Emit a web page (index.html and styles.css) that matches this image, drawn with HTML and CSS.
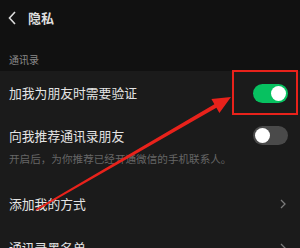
FILE: index.html
```html
<!DOCTYPE html>
<html lang="zh">
<head>
<meta charset="utf-8">
<link rel="stylesheet" href="styles.css">
</head>
<body>
<div class="page">
  <header class="top">
    <svg class="back" width="8" height="14" viewBox="0 0 8 14"><polyline points="7,1 1.5,7 7,13" fill="none" stroke="#dcdcdc" stroke-width="1.6"/></svg>
    <span class="title">隐私</span>
  </header>
  <div class="section">通讯录</div>
  <div class="list">
    <div class="row r1">
      <span class="label">加我为朋友时需要验证</span>
      <span class="toggle on"><span class="knob"></span></span>
    </div>
    <div class="row r2">
      <div class="main">
        <span class="label">向我推荐通讯录朋友</span>
        <span class="toggle off"><span class="knob"></span></span>
      </div>
      <div class="sub">开启后，为你推荐已经开通微信的手机联系人。</div>
    </div>
    <div class="row r3">
      <span class="label">添加我的方式</span>
      <svg class="chev" width="6" height="10" viewBox="0 0 6 10"><polyline points="1,1 5,5 1,9" fill="none" stroke="#7a7a7a" stroke-width="1.3"/></svg>
    </div>
    <div class="row r4">
      <span class="label">通讯录黑名单</span>
      <svg class="chev" width="6" height="10" viewBox="0 0 6 10"><polyline points="1,1 5,5 1,9" fill="none" stroke="#7a7a7a" stroke-width="1.3"/></svg>
    </div>
  </div>
  <div class="mark-box"></div>
  <svg class="mark-arrow" width="300" height="248" viewBox="0 0 300 248">
    <polygon fill="#e8221b" points="35.6,209.3 214.4,104.3 211.4,99.1 231,97 219.4,112.9 216.4,107.7 36.4,210.7"/>
  </svg>
</div>
</body>
</html>
```

FILE: styles.css
```css
* { box-sizing: border-box; }
html, body { margin: 0; padding: 0; }
body {
  background: #1a1a1a;
  font-family: "Noto Sans CJK SC", "Noto Sans", sans-serif;
  width: 300px;
  height: 248px;
  overflow: hidden;
}
.page { position: relative; width: 300px; height: 248px; overflow: hidden; }
.top {
  height: 36px;
  background: #111111;
  display: flex;
  align-items: center;
  padding-left: 8px;
  gap: 12px;
}
.back { display: block; }
.title {
  color: #dedede;
  font-size: 13px;
  font-weight: 700;
  line-height: 14px;
}
.section {
  background: #111111;
  height: 35px;
  padding: 17px 0 0 9px;
  color: #8a8a8a;
  font-size: 10px;
  line-height: 14px;
}
.list { background: #1b1b1b; }
.row {
  display: flex;
  align-items: center;
  justify-content: space-between;
  padding: 0 12px 0 9px;
}
.label { color: #e4e4e4; font-size: 12.8px; line-height: 16px; }
.r1 { height: 44px; }
.r2 {
  height: 67px;
  flex-direction: column;
  align-items: stretch;
  justify-content: flex-start;
  padding-top: 11px;
}
.r2 .main { display: flex; align-items: center; justify-content: space-between; }
.sub {
  color: #666666;
  font-size: 10.6px;
  line-height: 14px;
  margin-top: 7px;
  white-space: nowrap;
}
.r3 { height: 44px; padding-right: 14px; }
.r4 { height: 44px; padding-right: 14px; }
.toggle {
  width: 35px;
  height: 19px;
  border-radius: 10px;
  display: flex;
  align-items: center;
  padding: 0 2px;
}
.toggle.on { background: #07c160; justify-content: flex-end; }
.toggle.off { background: #4a4a4a; justify-content: flex-start; }
.knob { width: 15px; height: 15px; border-radius: 50%; background: #ffffff; }
.chev { display: block; }
.mark-box {
  position: absolute;
  left: 232px;
  top: 70px;
  width: 66px;
  height: 45px;
  border: 2px solid #e8221b;
}
.mark-arrow { position: absolute; left: 0; top: 0; }
```
